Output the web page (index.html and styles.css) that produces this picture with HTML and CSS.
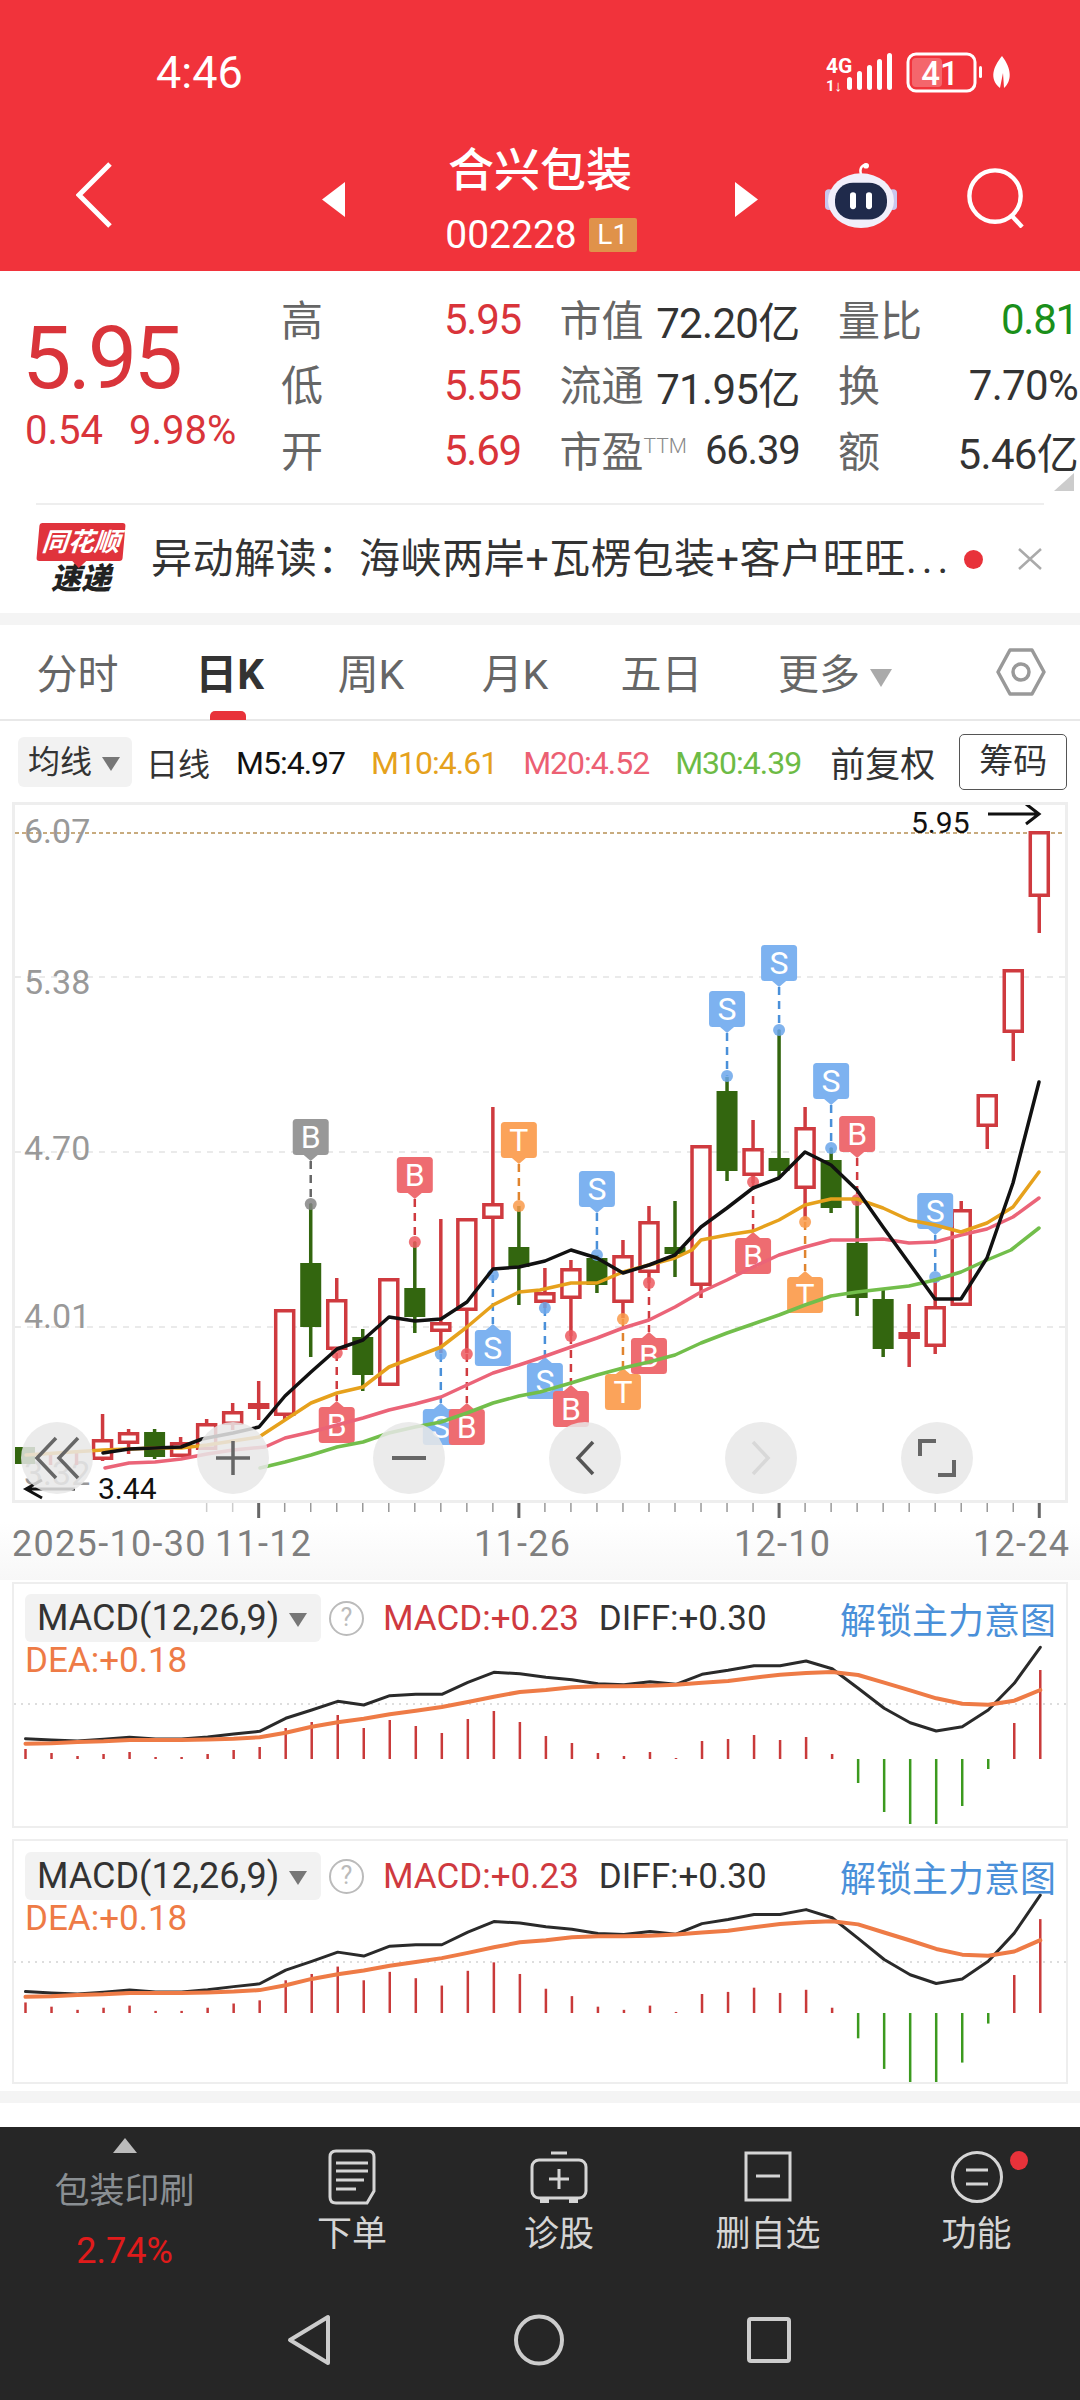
FILE: index.html
```html
<!DOCTYPE html>
<html lang="zh-CN">
<head>
  <meta charset="UTF-8" />
  <meta name="viewport" content="width=device-width, initial-scale=1.0"/>
  <title>合兴包装 002228</title>
  <link rel="stylesheet" href="styles.css">
</head>
<body>

  <header class="top">
    <div class="status">
      <span class="clock">4:46</span>
      <svg class="status-icons" width="186" height="44" viewBox="826 54 186 44">
        <text x="826" y="76" class="net">4G</text>
        <text x="826" y="94" class="net-small">1↓</text>
        <g fill="#fff">
          <rect x="847" y="80" width="5" height="13" rx="2.5"/>
          <rect x="857" y="74" width="5" height="19" rx="2.5"/>
          <rect x="867" y="68" width="5" height="25" rx="2.5"/>
          <rect x="877" y="62" width="5" height="31" rx="2.5"/>
          <rect x="887" y="56" width="5" height="37" rx="2.5"/>
        </g>
        <rect x="908" y="57" width="67" height="37" rx="8" fill="none" stroke="#fff" stroke-width="3"/>
        <rect x="912" y="61" width="30" height="29" rx="4" fill="#fff" fill-opacity=".25"/>
        <text x="940" y="88" class="batt">41</text>
        <rect x="979" y="69" width="3" height="12" rx="1.5" fill="#fff"/>
        <path d="M1002 59 C1012 72 1012 84 1004 91 L1003 76 L1000 91 C989 82 993 70 1002 59 Z" fill="#fff"/>
      </svg>
    </div>
    <div class="nav">
      <svg class="back" width="36" height="66" viewBox="0 0 36 66"><path d="M34 2 L3 33 L34 64" fill="none" stroke="#fff" stroke-width="5"/></svg>
      <svg class="prev" width="23" height="35" viewBox="0 0 23 35"><path d="M23 0 V35 L0 17.5 Z" fill="#fff"/></svg>
      <div class="stock">
        <div class="stock-name">合兴包装</div>
        <div class="stock-code">002228<span class="badge">L1</span></div>
      </div>
      <svg class="next" width="23" height="35" viewBox="0 0 23 35"><path d="M0 0 V35 L23 17.5 Z" fill="#fff"/></svg>
      <svg class="robot" width="72" height="66" viewBox="0 0 72 70" preserveAspectRatio="none">
        <path d="M36 13 C34 6 38 2 42 3" fill="none" stroke="#fff" stroke-width="2.5"/>
        <circle cx="41" cy="4" r="3" fill="#fff"/>
        <rect x="0" y="29" width="8" height="22" rx="4" fill="#c9c6ee"/>
        <rect x="64" y="29" width="8" height="22" rx="4" fill="#c9c6ee"/>
        <ellipse cx="36" cy="41" rx="33" ry="29" fill="#f1effb"/>
        <rect x="10" y="22" width="52" height="39" rx="18" fill="#1f2a4b"/>
        <rect x="25" y="32" width="6" height="18" rx="3" fill="#fff"/>
        <rect x="41" y="32" width="6" height="18" rx="3" fill="#fff"/>
      </svg>
      <svg class="search" width="60" height="60" viewBox="0 0 60 62">
        <circle cx="29" cy="29" r="26.5" fill="none" stroke="#fff" stroke-width="4.5"/>
        <path d="M46 49 L57 61" stroke="#fff" stroke-width="4.5"/>
      </svg>
    </div>
  </header>

  <section class="quote">
    <div class="price-box">
      <div class="price">5.95</div>
      <div class="change"><span>0.54</span><span>9.98%</span></div>
    </div>
    <div class="quote-grid">
      <div class="cell"><span class="lb">高</span><span class="num red">5.95</span></div>
      <div class="cell"><span class="lb">市值</span><span class="num">72.20亿</span></div>
      <div class="cell"><span class="lb">量比</span><span class="num green">0.81</span></div>
      <div class="cell"><span class="lb">低</span><span class="num red">5.55</span></div>
      <div class="cell"><span class="lb">流通</span><span class="num">71.95亿</span></div>
      <div class="cell"><span class="lb">换</span><span class="num">7.70%</span></div>
      <div class="cell"><span class="lb">开</span><span class="num red">5.69</span></div>
      <div class="cell"><span class="lb">市盈<sup class="ttm">TTM</sup></span><span class="num small">66.39</span></div>
      <div class="cell"><span class="lb">额</span><span class="num">5.46亿</span></div>
    </div>
    <i class="corner"></i>
  </section>

  <section class="ad">
    <div class="ad-logo">
      <div class="ad-brand">同花顺</div>
      <div class="ad-sub">速递</div>
    </div>
    <div class="ad-text">异动解读：海峡两岸+瓦楞包装+客户旺旺<span class="dots">...</span></div>
    <i class="ad-dot"></i>
    <svg class="ad-close" width="24" height="22" viewBox="0 0 24 22"><path d="M1 1 L23 21 M23 1 L1 21" stroke="#aaa" stroke-width="2.5"/></svg>
  </section>

  <div class="band"></div>

  <nav class="tabs">
    <span class="tab">分时</span>
    <span class="tab active">日K</span>
    <span class="tab">周K</span>
    <span class="tab">月K</span>
    <span class="tab">五日</span>
    <span class="tab">更多<i class="tri tri-more"></i></span>
    <svg class="hex" width="50" height="48" viewBox="0 0 50 48">
      <path d="M14 2 H36 L48 24 L36 46 H14 L2 24 Z" fill="none" stroke="#999" stroke-width="3.5" stroke-linejoin="round"/>
      <circle cx="25" cy="24" r="8" fill="none" stroke="#999" stroke-width="3.5"/>
    </svg>
  </nav>

  <div class="toolbar">
    <span class="chip">均线<i class="tri"></i></span>
    <span class="tool-cn">日线</span>
    <span class="ma">M5:4.97</span>
    <span class="ma m10">M10:4.61</span>
    <span class="ma m20">M20:4.52</span>
    <span class="ma m30">M30:4.39</span>
    <span class="tool-cn wide">前复权</span>
    <span class="chip-btn">筹码</span>
  </div>

  <div class="kbox">
    <svg id="kline" width="1050" height="695" viewBox="15 805 1050 695"></svg>
    <div class="kbtns">
      <span class="kbtn"><svg width="46" height="44" viewBox="0 0 46 44"><path d="M22 2 L3 22 L22 42 M44 2 L25 22 L44 42" fill="none" stroke="#666" stroke-width="3.5"/></svg></span>
      <span class="kbtn"><svg width="34" height="34" viewBox="0 0 34 34"><path d="M0 17 H34 M17 0 V34" stroke="#666" stroke-width="3.5"/></svg></span>
      <span class="kbtn"><svg width="34" height="6" viewBox="0 0 34 6"><path d="M0 3 H34" stroke="#666" stroke-width="4"/></svg></span>
      <span class="kbtn"><svg width="20" height="36" viewBox="0 0 20 36"><path d="M18 2 L3 18 L18 34" fill="none" stroke="#555" stroke-width="3.5"/></svg></span>
      <span class="kbtn"><svg width="20" height="36" viewBox="0 0 20 36"><path d="M2 2 L17 18 L2 34" fill="none" stroke="#d8d8d8" stroke-width="3.5"/></svg></span>
      <span class="kbtn"><svg width="38" height="38" viewBox="0 0 38 38"><path d="M2 17 V2 H18 M36 21 V36 H20" fill="none" stroke="#666" stroke-width="4"/></svg></span>
    </div>
  </div>

  <svg id="axis" class="axis" width="1080" height="77" viewBox="0 1503 1080 77"></svg>

  <div class="macd">
    <svg id="macd1" class="macd-svg" width="1052" height="240" viewBox="14 0 1052 240"></svg>
    <div class="macd-head">
      <span class="drop">MACD(12,26,9)<i class="tri"></i></span>
      <span class="help">?</span>
      <span class="v-macd">MACD:+0.23</span>
      <span class="v-diff">DIFF:+0.30</span>
      <span class="unlock">解锁主力意图</span>
    </div>
    <div class="v-dea">DEA:+0.18</div>
  </div>

  <div class="macd second">
    <svg id="macd2" class="macd-svg" width="1052" height="241" viewBox="14 0 1052 241"></svg>
    <div class="macd-head">
      <span class="drop">MACD(12,26,9)<i class="tri"></i></span>
      <span class="help">?</span>
      <span class="v-macd">MACD:+0.23</span>
      <span class="v-diff">DIFF:+0.30</span>
      <span class="unlock">解锁主力意图</span>
    </div>
    <div class="v-dea">DEA:+0.18</div>
  </div>

  <div class="band bottom-band"></div>

  <footer class="bottom">
    <div class="actions">
      <div class="act sector">
        <i class="up"></i>
        <span class="sector-name">包装印刷</span>
        <span class="sector-pct">2.74%</span>
      </div>
      <div class="act">
        <svg width="48" height="56" viewBox="0 0 48 56">
          <path d="M8 2 H40 Q46 2 46 8 V42 L39 54 H8 Q2 54 2 48 V8 Q2 2 8 2 Z" fill="none" stroke="#d5d5d5" stroke-width="3"/>
          <path d="M8 14 H40 M8 22 H40 M8 31 H36 M8 40 H28" stroke="#d5d5d5" stroke-width="3"/>
        </svg>
        <span class="act-name">下单</span>
      </div>
      <div class="act">
        <svg width="58" height="56" viewBox="0 0 58 56">
          <path d="M21 4 H37" stroke="#d5d5d5" stroke-width="3"/>
          <rect x="2" y="11" width="54" height="38" rx="7" fill="none" stroke="#d5d5d5" stroke-width="3"/>
          <path d="M19 30 H39 M29 20 V40" stroke="#d5d5d5" stroke-width="3"/>
          <path d="M10 49 H19 V54 H10 Z M39 49 H48 V54 H39 Z" fill="#d5d5d5"/>
        </svg>
        <span class="act-name">诊股</span>
      </div>
      <div class="act">
        <svg width="48" height="56" viewBox="0 0 48 56">
          <rect x="2" y="4" width="44" height="47" fill="none" stroke="#d5d5d5" stroke-width="3"/>
          <path d="M12 27 H36" stroke="#d5d5d5" stroke-width="3"/>
        </svg>
        <span class="act-name">删自选</span>
      </div>
      <div class="act">
        <svg width="52" height="56" viewBox="0 0 52 56">
          <circle cx="26" cy="28" r="24.5" fill="none" stroke="#d5d5d5" stroke-width="3"/>
          <path d="M15 21 H37 M15 35 H37" stroke="#d5d5d5" stroke-width="3"/>
        </svg>
        <span class="act-name">功能</span>
        <i class="act-dot"></i>
      </div>
    </div>
    <div class="sysnav">
      <svg width="44" height="52" viewBox="0 0 44 52"><path d="M41 3 V49 L3 26 Z" fill="none" stroke="#ccc" stroke-width="4" stroke-linejoin="round"/></svg>
      <svg width="50" height="52" viewBox="0 0 50 52"><ellipse cx="25" cy="26" rx="23" ry="23.5" fill="none" stroke="#ccc" stroke-width="4"/></svg>
      <svg width="44" height="52" viewBox="0 0 44 52"><rect x="2" y="5" width="40" height="42" rx="2" fill="none" stroke="#ccc" stroke-width="4"/></svg>
    </div>
  </footer>

  <script src="chart.js"></script>
</body>
</html>
```

FILE: styles.css
```css
* {
  box-sizing: border-box;
}

body {
  margin: 0;
  width: 1080px;
  height: 2400px;
  overflow: hidden;
  background-color: white;
  color: #333;
  font-family: Roboto, "Noto Sans CJK SC", sans-serif;
}

i {
  display: inline-block;
}

/* Cabecera roja */
.top {
  height: 271px;
  background-color: #f1333b;
  color: white;
}

.status {
  height: 110px;
  padding: 36px 68px 0 156px;
  display: flex;
  align-items: center;
  justify-content: space-between;
}

.clock {
  font-size: 45px;
  line-height: 60px;
}

.net {
  font: 700 21px Roboto, sans-serif;
  fill: white;
}

.net-small {
  font: 700 15px Roboto, sans-serif;
  fill: white;
}

.batt {
  font: 500 33px Roboto, sans-serif;
  fill: white;
  text-anchor: middle;
}

.nav {
  height: 161px;
  padding: 9px 0 0 76px;
  display: flex;
  align-items: center;
}

.prev {
  margin-left: 210px;
  margin-top: 9px;
}

.next {
  margin-top: 9px;
}

.stock {
  width: 390px;
  margin-top: 8px;
  display: flex;
  flex-direction: column;
  align-items: center;
}

.stock-name {
  font-size: 46px;
  font-weight: 500;
  line-height: 50px;
  margin-bottom: 22px;
}

.stock-code {
  display: flex;
  align-items: center;
  margin-left: 2px;
  font-size: 39px;
  line-height: 36px;
}

.badge {
  width: 48px;
  height: 34px;
  margin-left: 12px;
  background-color: #e0924a;
  border-radius: 2px;
  font-size: 28px;
  line-height: 34px;
  text-align: center;
}

.robot {
  margin-left: 67px;
}

.search {
  margin-left: 69px;
  margin-top: 6px;
}

/* Panel de cotizacion */
.quote {
  position: relative;
  height: 234px;
  margin: 0 36px;
  padding-top: 16px;
  display: flex;
  border-bottom: 2px solid #eee;
}

.price-box {
  width: 258px;
  flex-shrink: 0;
  margin-left: -13px;
  padding-top: 26px;
  color: #d9343a;
}

.price {
  font-size: 88px;
  line-height: 90px;
  letter-spacing: -3.5px;
  margin-left: -1px;
}

.change {
  display: flex;
  gap: 26px;
  margin-left: 2px;
  font-size: 40px;
  line-height: 56px;
}

.quote-grid {
  display: grid;
  grid-template-columns: repeat(3, 240px);
  grid-auto-rows: 65.5px;
  column-gap: 38.5px;
  flex-shrink: 0;
}

.cell {
  display: flex;
  align-items: center;
  justify-content: space-between;
}

.lb {
  margin-top: -5px;
  color: #666;
  font-size: 42px;
}

.ttm {
  font-size: 21px;
  font-weight: 300;
  color: #888;
  vertical-align: 14px;
  line-height: 0;
}

.num {
  color: #333;
  font-size: 42px;
  letter-spacing: -0.7px;
}

.num.small {
  font-size: 40px;
  letter-spacing: -1.2px;
}

.num.red {
  color: #d9343a;
  letter-spacing: -1.2px;
}

.num.green {
  color: #1a8f1a;
  letter-spacing: -1.2px;
}

.corner {
  position: absolute;
  right: -30px;
  bottom: 12px;
  width: 20px;
  height: 18px;
  background-color: #ccc;
  clip-path: polygon(100% 0, 100% 100%, 0 100%);
}

/* Fila de noticia */
.ad {
  height: 108px;
  padding-left: 37px;
  display: flex;
  align-items: center;
}

.ad-logo {
  width: 88px;
  display: flex;
  flex-direction: column;
  align-items: center;
}

.ad-brand {
  position: relative;
  width: 86px;
  height: 38px;
  background-color: #e0333c;
  border-radius: 3px;
  transform: skewX(-5deg);
  color: white;
  font-size: 26px;
  font-weight: 700;
  font-style: italic;
  line-height: 38px;
  text-align: center;
  white-space: nowrap;
}

.ad-brand::after {
  content: "";
  position: absolute;
  left: 36px;
  bottom: -7px;
  border: 7px solid transparent;
  border-top-color: #e0333c;
  border-bottom: 0;
}

.ad-sub {
  margin-top: 2px;
  color: #222;
  font-size: 30px;
  font-weight: 900;
  font-style: italic;
  line-height: 32px;
}

.ad-text {
  width: 802px;
  margin-left: 26px;
  color: #333;
  font-size: 41px;
  letter-spacing: 0.6px;
  line-height: 50px;
  white-space: nowrap;
}

.dots {
  letter-spacing: 5px;
}

.ad-dot {
  width: 19px;
  height: 19px;
  margin-left: 11px;
  background-color: #e8323a;
  border-radius: 50%;
}

.ad-close {
  margin-left: 35px;
}

.band {
  height: 12px;
  background-color: #f4f4f4;
}

/* Pestanas del periodo */
.tabs {
  position: relative;
  height: 96px;
  border-bottom: 2px solid #e8e8e8;
  display: grid;
  grid-template-columns: 155px 149px 134px 154px 139px 208px 60px;
  align-items: center;
}

.tab {
  color: #666;
  font-size: 41px;
  line-height: 96px;
  text-align: center;
  white-space: nowrap;
  margin-top: 2px;
}

.tab.active {
  color: #333;
  font-size: 42px;
  font-weight: 700;
}

.tab.active::after {
  content: "";
  position: absolute;
  left: 210px;
  bottom: -1px;
  width: 36px;
  height: 9px;
  background-color: #e8323a;
  border-radius: 5px 5px 0 0;
}

.tri {
  width: 0;
  height: 0;
  border: 9px solid transparent;
  border-top: 14px solid #777;
  border-bottom: 0;
  margin-left: 10px;
  vertical-align: middle;
}

.tri-more {
  border-left-width: 11px;
  border-right-width: 11px;
  border-top: 18px solid #aaa;
}

.hex {
  margin-left: 57px;
  margin-top: -4px;
}

/* Barra de medias */
.toolbar {
  height: 81px;
  padding-left: 18px;
  display: flex;
  align-items: center;
  gap: 26px;
  font-size: 32px;
  white-space: nowrap;
}

.chip {
  width: 114px;
  height: 50px;
  margin-right: -12px;
  padding-left: 10px;
  background-color: #f2f2f2;
  border-radius: 6px;
  line-height: 50px;
}

.tool-cn {
  color: #333;
}

.tool-cn.wide {
  margin-left: 3px;
  font-size: 35px;
}

.ma {
  margin-top: 3px;
  color: #111;
  letter-spacing: -1px;
}

.m10 {
  color: #e5a11c;
}

.m20 {
  color: #ec6073;
}

.m30 {
  color: #6dbb45;
}

.chip-btn {
  width: 108px;
  height: 56px;
  margin-left: -2px;
  border: 1.5px solid #555;
  border-radius: 5px;
  font-size: 34px;
  line-height: 53px;
  text-align: center;
}

/* Grafico de velas */
.kbox {
  position: relative;
  height: 701px;
  margin: 0 12px;
  border: 3px solid #eee;
}

.kbox svg {
  display: block;
}

.kbtns {
  position: absolute;
  left: 6px;
  top: 617px;
  display: flex;
  gap: 104px;
}

.kbtn {
  width: 72px;
  height: 72px;
  background-color: rgba(232, 232, 232, 0.85);
  border-radius: 50%;
  display: flex;
  align-items: center;
  justify-content: center;
}

.axis {
  display: block;
  background: linear-gradient(#fff 25%, #f7f7f7);
}

/* Paneles MACD */
.macd {
  position: relative;
  height: 246px;
  margin: 2px 12px 0;
  border: 2px solid #eee;
  padding: 8px 0 0 11px;
  overflow: hidden;
}

.macd.second {
  height: 245px;
  margin-top: 11px;
  padding-top: 9px;
}

.macd-svg {
  position: absolute;
  left: 0;
  top: 0;
}

.macd-head {
  position: relative;
  display: flex;
  align-items: center;
  font-size: 35px;
  white-space: nowrap;
}

.drop {
  width: 296px;
  height: 48px;
  padding-left: 12px;
  background-color: #f2f2f2;
  border-radius: 6px;
  color: #333;
  font-size: 36px;
  line-height: 48px;
}

.help {
  width: 35px;
  height: 35px;
  margin-left: 8px;
  border: 2.5px solid #bbb;
  border-radius: 50%;
  color: #bbb;
  font-size: 25px;
  line-height: 30px;
  text-align: center;
}

.v-macd {
  margin-left: 19px;
  color: #cf3a3f;
}

.v-diff {
  margin-left: 20px;
  color: #333;
}

.unlock {
  margin-left: auto;
  margin-right: 10px;
  color: #4a90d9;
  font-size: 36px;
}

.v-dea {
  position: relative;
  margin-top: 0;
  color: #ee7b46;
  font-size: 35px;
  line-height: 34px;
}

.bottom-band {
  margin-top: 7px;
  height: 12px;
}

/* Barra inferior */
.bottom {
  height: 273px;
  margin-top: 24px;
  background-color: #262626;
}

.actions {
  height: 150px;
  display: grid;
  grid-template-columns: 249px 206px 208px 210px 207px;
}

.act {
  position: relative;
  padding-top: 22px;
  display: flex;
  flex-direction: column;
  align-items: center;
}

.act-name {
  margin-top: 10px;
  color: #d5d5d5;
  font-size: 35px;
  line-height: 40px;
}

.act-dot {
  position: absolute;
  left: 137px;
  top: 24px;
  width: 18px;
  height: 19px;
  background-color: #e8323a;
  border-radius: 50%;
}

.sector {
  padding-top: 11px;
}

.up {
  width: 0;
  height: 0;
  border: 12.5px solid transparent;
  border-bottom: 15px solid #bbb;
  border-top: 0;
}

.sector-name {
  margin-top: 20px;
  color: #8a8f93;
  font-size: 35px;
  line-height: 38px;
}

.sector-pct {
  margin-top: 20px;
  color: #e01b1b;
  font-size: 36px;
  line-height: 40px;
}

.sysnav {
  padding: 37px 0 0 287px;
  display: flex;
  gap: 183px;
}
```

FILE: chart.js
```js
var RED = "#cf3a3f", GREEN = "#33660f";

function cx(i) {
  return 24.5 + 26.02 * i;
}

// [indice, maximo, tope cuerpo, base cuerpo, minimo, tipo]
var velas = [
  [0, 1447, 1447, 1464, 1464, "g"], [1, 1452, 1457, 1460, 1465, "r"], [2, 1452, 1457, 1460, 1465, "r"],
  [3, 1414, 1439, 1460, 1461, "r"], [4, 1429, 1432, 1444, 1454, "r"], [5, 1429, 1432, 1457, 1459, "g"],
  [6, 1437, 1442, 1457, 1457, "r"], [7, 1419, 1423, 1450, 1450, "r"], [8, 1403, 1411, 1425, 1430, "r"],
  [9, 1381, 1403, 1409, 1420, "r"], [10, 1309, 1309, 1416, 1420, "r"], [11, 1204, 1263, 1327, 1357, "g"],
  [12, 1278, 1299, 1350, 1350, "r"], [13, 1329, 1337, 1375, 1391, "g"], [14, 1278, 1278, 1386, 1386, "r"],
  [15, 1242, 1288, 1317, 1333, "g"], [16, 1219, 1322, 1332, 1353, "r"], [17, 1218, 1218, 1311, 1353, "r"],
  [18, 1107, 1203, 1219, 1270, "r"], [19, 1206, 1247, 1267, 1305, "g"], [20, 1268, 1292, 1303, 1308, "r"],
  [21, 1260, 1268, 1299, 1336, "r"], [22, 1255, 1258, 1285, 1293, "g"], [23, 1240, 1255, 1303, 1318, "r"],
  [24, 1206, 1221, 1273, 1283, "r"], [25, 1201, 1247, 1254, 1277, "g"], [26, 1145, 1145, 1286, 1298, "r"],
  [27, 1077, 1091, 1171, 1181, "g"], [28, 1120, 1148, 1176, 1183, "r"], [29, 1030, 1158, 1171, 1177, "g"],
  [30, 1107, 1127, 1189, 1220, "r"], [31, 1148, 1160, 1208, 1213, "g"], [32, 1197, 1243, 1298, 1316, "g"],
  [33, 1290, 1299, 1349, 1357, "g"], [34, 1304, 1332, 1339, 1367, "r"], [35, 1278, 1306, 1347, 1354, "r"],
  [36, 1201, 1209, 1306, 1306, "r"], [37, 1094, 1094, 1127, 1149, "r"], [38, 969, 969, 1033, 1061, "r"],
  [39, 831, 831, 897, 933, "r"]
];

// [indice, letra, color, y punto, y caja, apunta abajo]
var marcas = [
  [11, "B", "gray", 1204, 1119, true], [15, "B", "pink", 1242, 1157, true], [19, "T", "orange", 1206, 1122, true],
  [27, "S", "blue", 1076, 991, true], [29, "S", "blue", 1030, 945, true], [31, "S", "blue", 1148, 1063, true],
  [32, "B", "pink", 1200, 1116, true], [22, "S", "blue", 1255, 1171, true], [35, "S", "blue", 1277, 1193, true],
  [12, "B", "pink", 1353, 1407, false], [16, "S", "blue", 1354, 1409, false], [17, "B", "pink", 1354, 1409, false],
  [18, "S", "blue", 1275, 1330, false], [20, "S", "blue", 1308, 1363, false], [21, "B", "pink", 1336, 1391, false],
  [23, "T", "orange", 1319, 1374, false], [24, "B", "pink", 1283, 1338, false], [28, "B", "pink", 1182, 1238, false],
  [30, "T", "orange", 1222, 1277, false]
];

var colores = {
  gray: ["#989898", "#666", "#858585"],
  pink: ["#ee6c71", "#cf3a3f", "#ec5a60"],
  orange: ["#fba35a", "#e0842e", "#f99a4a"],
  blue: ["#7db2f0", "#4a90d9", "#6ba6ea"]
};

var m5 = [[103,1453],[129,1449],[155,1448],[181,1447],[202,1439],[233,1433],[259,1427],[285,1396],[311,1372],[337,1349],[363,1340],[389,1317],[415,1321],[441,1319],[467,1302],[493,1269],[519,1267],[545,1261],[571,1250],[597,1258],[623,1273],[649,1265],[675,1255],[701,1227],[727,1208],[753,1188],[779,1178],[805,1152],[831,1165],[857,1190],[883,1227],[909,1263],[935,1299],[961,1299],[987,1258],[1013,1183],[1039,1082]];
var m10 = [[26,1455],[103,1450],[129,1449],[155,1448],[181,1448],[207,1445],[233,1441],[259,1437],[285,1420],[311,1403],[337,1393],[363,1387],[389,1367],[415,1357],[441,1347],[467,1327],[493,1305],[519,1292],[540,1290],[571,1283],[597,1283],[623,1272],[649,1265],[675,1258],[692,1250],[701,1240],[727,1235],[753,1231],[779,1220],[805,1205],[831,1199],[857,1199],[883,1208],[909,1220],[935,1225],[961,1232],[987,1223],[1013,1207],[1039,1172]];
var m20 = [[105,1468],[129,1463],[155,1462],[181,1459],[207,1454],[233,1450],[265,1447],[285,1438],[311,1432],[337,1425],[363,1418],[389,1410],[415,1404],[441,1397],[467,1385],[493,1373],[519,1365],[540,1358],[571,1347],[597,1338],[623,1328],[649,1320],[675,1307],[701,1292],[727,1280],[753,1267],[779,1255],[805,1247],[831,1240],[857,1240],[883,1239],[909,1243],[935,1242],[961,1235],[987,1229],[1013,1217],[1039,1198]];
var m30 = [[260,1468],[285,1462],[311,1455],[337,1447],[363,1442],[389,1433],[415,1427],[441,1422],[467,1413],[493,1403],[519,1396],[540,1392],[571,1383],[597,1375],[623,1368],[649,1362],[675,1355],[701,1343],[727,1333],[753,1324],[779,1315],[805,1305],[831,1296],[857,1292],[883,1289],[909,1286],[935,1280],[961,1272],[987,1260],[1011,1250],[1039,1228]];

function linea(x1, y1, x2, y2, color, ancho, dash) {
  return '<line x1="' + x1 + '" y1="' + y1 + '" x2="' + x2 + '" y2="' + y2 + '" stroke="' + color + '" stroke-width="' + ancho + '"' +
    (dash ? ' stroke-dasharray="' + dash + '"' : "") + '/>';
}

function texto(x, y, t, tam, color, ancla) {
  return '<text x="' + x + '" y="' + y + '" font-family="Roboto" font-size="' + tam + '" fill="' + color + '"' +
    (ancla ? ' text-anchor="' + ancla + '"' : "") + '>' + t + '</text>';
}

function polilinea(puntos, color, ancho) {
  var p = puntos.map(function (q) { return q[0] + "," + q[1]; }).join(" ");
  return '<polyline points="' + p + '" fill="none" stroke="' + color + '" stroke-width="' + ancho + '" stroke-linejoin="round" stroke-linecap="round"/>';
}

function dibujarVela(v) {
  var x = cx(v[0]), h = "";
  if (v[5] === "g") {
    h += linea(x, v[1], x, v[4], GREEN, 3.5);
    h += '<rect x="' + (x - 10.5) + '" y="' + v[2] + '" width="21" height="' + (v[3] - v[2]) + '" fill="' + GREEN + '"/>';
  } else {
    h += linea(x, v[1], x, v[4], RED, 3.5);
    h += '<rect x="' + (x - 9) + '" y="' + (v[2] + 1.75) + '" width="18" height="' + (v[3] - v[2] - 3.5) + '" fill="#fff" stroke="' + RED + '" stroke-width="3.5"/>';
  }
  return h;
}

function dibujarMarca(m) {
  var x = cx(m[0]), c = colores[m[2]], ay = m[3], by = m[4], abajo = m[5], h = "";
  var punta = abajo ? by + 42 : by - 6;
  var cuerpo = abajo ? by + 36 : by;
  h += linea(x, abajo ? punta : ay, x, abajo ? ay : punta, c[1], 2.5, "8 6");
  h += '<circle cx="' + x + '" cy="' + ay + '" r="6" fill="' + c[2] + '" fill-opacity=".85"/>';
  h += '<rect x="' + (x - 18) + '" y="' + by + '" width="36" height="36" rx="3.5" fill="' + c[0] + '"/>';
  h += '<path d="M' + (x - 7) + ' ' + cuerpo + ' L' + x + ' ' + punta + ' L' + (x + 7) + ' ' + cuerpo + ' Z" fill="' + c[0] + '"/>';
  h += texto(x, by + 29, m[1], 32, "#fff", "middle");
  return h;
}

function dibujarKline() {
  var h = "";
  [977, 1152, 1327].forEach(function (y) {
    h += linea(15, y, 1065, y, "#e4e4e4", 1.5, "6 6");
  });
  h += linea(15, 833, 1065, 833, "#c8ab7e", 2, "4 3");
  h += texto(24, 843, "6.07", 34, "#999");
  h += texto(24, 994, "5.38", 34, "#999");
  h += texto(24, 1160, "4.70", 34, "#999");
  h += texto(24, 1328, "4.01", 34, "#999");
  h += texto(24, 1485, "3.32", 34, "#999");

  velas.forEach(function (v) { h += dibujarVela(v); });
  marcas.forEach(function (m) { h += dibujarMarca(m); });

  h += polilinea(m30, "#72be4b", 3.5);
  h += polilinea(m20, "#eb6478", 3.5);
  h += polilinea(m10, "#e6a11c", 3.5);
  h += polilinea(m5, "#111", 3.5);

  // etiquetas de maximo y minimo
  h += texto(911, 833, "5.95", 30, "#111");
  h += '<path d="M988 814 H1038 M1026 804 L1039 814 L1026 824" fill="none" stroke="#111" stroke-width="3"/>';
  h += texto(98, 1499, "3.44", 30, "#111");
  h += '<path d="M75 1489 H26 M42 1480 L26 1489 L42 1498" fill="none" stroke="#111" stroke-width="3"/>';

  document.getElementById("kline").innerHTML = h;
}

function dibujarEje() {
  var h = "";
  for (var i = 7; i < 40; i++) {
    var x = cx(i);
    if ((i - 9) % 10 === 0) {
      h += linea(x, 1503, x, 1518, "#666", 3);
    } else {
      h += linea(x, 1503, x, 1512, i < 9 ? "#ccc" : "#999", 1.5);
    }
  }
  var y = 1556;
  h += '<g letter-spacing="1.3">';
  h += texto(12, y, "2025-10-30", 36, "#7f7f7f");
  h += texto(215, y, "11-12", 36, "#7f7f7f");
  h += texto(474, y, "11-26", 36, "#7f7f7f");
  h += texto(734, y, "12-10", 36, "#7f7f7f");
  h += texto(973, y, "12-24", 36, "#7f7f7f");
  h += '</g>';
  document.getElementById("axis").innerHTML = h;
}

var barras = [10,6,3,5,7,2,2,5,9,12,31,37,44,31,39,33,26,40,48,37,23,16,6,3,7,1,18,20,24,19,22,5,-24,-53,-66,-67,-47,-10,36,89];
var diff = [20.3,19,18,19.7,21.7,20,20,22,25,27.7,40.7,49,57.7,54,63.3,64.7,64.7,76.7,86.7,85.3,81.7,79.3,75.3,74.3,77.3,74.7,84.7,88.7,93.3,93.3,98,90.3,70.7,50.7,36.3,28,32.3,49,75.7,111.7];
var dea = [15.3,15.8,17,17.7,19,19,19,19.5,20.3,21.7,26.3,32.3,36.7,40.3,44.7,48.3,52,57,62.3,67,69,71.7,72.7,72.7,73.3,74.3,76.3,78,81.3,84.3,86,87,84,76.3,68.7,60.7,55.3,54.3,58.3,69];

function dibujarMacd(id, base, medio, escala) {
  var h = linea(14, medio, 1066, medio, "#ddd", 2, "2 5");
  function x(i) { return 25.5 + 26.02 * i; }
  barras.forEach(function (b, i) {
    h += linea(x(i), base, x(i), base - b * escala, b > 0 ? "#c93a3a" : "#3c9a1f", 2.5);
  });
  h += polilinea(diff.map(function (d, i) { return [x(i), base - d * escala]; }), "#2a2a2a", 3);
  h += polilinea(dea.map(function (d, i) { return [x(i), base - d * escala]; }), "#ee7b46", 4);
  document.getElementById(id).innerHTML = h;
}

dibujarKline();
dibujarEje();
dibujarMacd("macd1", 175, 120, 1);
dibujarMacd("macd2", 172, 121, 1.055);
```
